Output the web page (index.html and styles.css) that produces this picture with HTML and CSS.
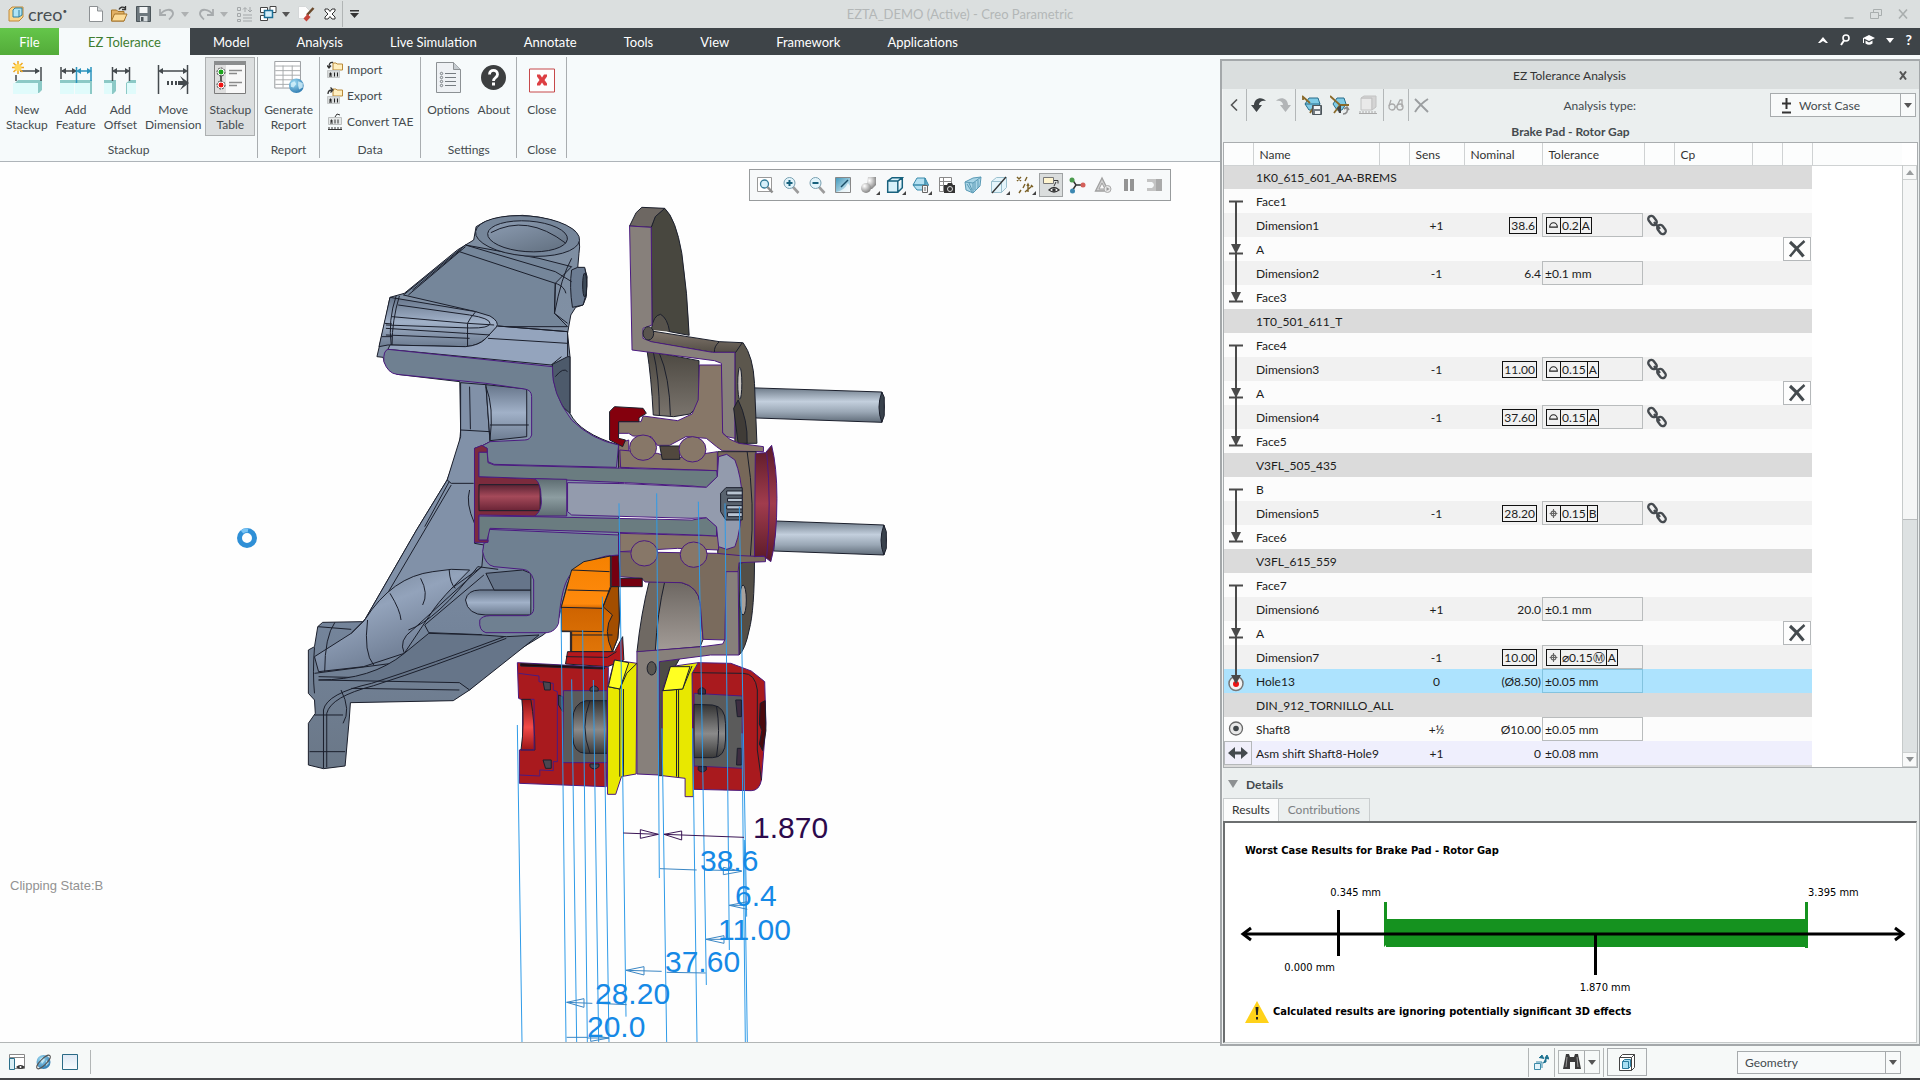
FILE: index.html
```html
<!DOCTYPE html>
<html lang="en">
<head>
<meta charset="utf-8">
<meta name="viewport" content="width=device-width, initial-scale=1">
<title>EZTA_DEMO (Active) - Creo Parametric</title>
<link rel="stylesheet" href="styles.css">
</head>
<body>
<svg class="defs" aria-hidden="true">
  <defs>
    <linearGradient id="gGlass" x1="0" y1="0" x2="1" y2="1"><stop offset="0" stop-color="#3f97bb"/><stop offset="1" stop-color="#e6f5fa"/></linearGradient>
    <linearGradient id="gPale" x1="0" y1="0" x2="0" y2="1"><stop offset="0" stop-color="#dfe9f5"/><stop offset="1" stop-color="#f8fbfe"/></linearGradient>
    <radialGradient id="gGlobe" cx=".35" cy=".3" r=".8"><stop offset="0" stop-color="#9edcf4"/><stop offset="1" stop-color="#2674ac"/></radialGradient>
    <radialGradient id="gBall" cx=".35" cy=".3" r=".8"><stop offset="0" stop-color="#fff"/><stop offset="1" stop-color="#777"/></radialGradient>
    <linearGradient id="gPin" x1="0" y1="0" x2="0" y2="1"><stop offset="0" stop-color="#6d7a88"/><stop offset=".4" stop-color="#c3cfdd"/><stop offset=".7" stop-color="#9aa7b5"/><stop offset="1" stop-color="#5f6b78"/></linearGradient>
    <linearGradient id="gRod" x1="0" y1="0" x2="0" y2="1"><stop offset="0" stop-color="#5a2233"/><stop offset=".45" stop-color="#a54a5a"/><stop offset="1" stop-color="#6a2436"/></linearGradient>
    <linearGradient id="gPlug" x1="0" y1="0" x2="0" y2="1"><stop offset="0" stop-color="#5d6c71"/><stop offset=".5" stop-color="#8d9da1"/><stop offset="1" stop-color="#5d6c71"/></linearGradient>
    <linearGradient id="gCap" x1="0" y1="0" x2="0" y2="1"><stop offset="0" stop-color="#5a1a28"/><stop offset=".5" stop-color="#a13c4d"/><stop offset="1" stop-color="#5a1a28"/></linearGradient>
    <linearGradient id="gBody" x1="0" y1="0" x2="0" y2="1"><stop offset="0" stop-color="#7d8da0"/><stop offset=".45" stop-color="#8493a9"/><stop offset=".75" stop-color="#74849a"/><stop offset="1" stop-color="#6a7787"/></linearGradient>
    <linearGradient id="gBore" x1="0" y1="0" x2="1" y2="1"><stop offset="0" stop-color="#8f9fb5"/><stop offset="1" stop-color="#5f6d7d"/></linearGradient>
    <linearGradient id="gArm" x1="0" y1="0" x2=".6" y2="1"><stop offset="0" stop-color="#6b7a8d"/><stop offset=".45" stop-color="#93a3bb"/><stop offset="1" stop-color="#66748a"/></linearGradient>
    <linearGradient id="gLip" x1="0" y1="0" x2="0" y2="1"><stop offset="0" stop-color="#66758a"/><stop offset=".5" stop-color="#a1b1c8"/><stop offset="1" stop-color="#6c7b90"/></linearGradient>
    <linearGradient id="gDiscLo" x1="0" y1="0" x2="0" y2="1"><stop offset="0" stop-color="#6d6762"/><stop offset="1" stop-color="#a39c97"/></linearGradient>
    <linearGradient id="gHat" x1="0" y1="0" x2="0" y2="1"><stop offset="0" stop-color="#84796f"/><stop offset="1" stop-color="#544e46"/></linearGradient>
    <linearGradient id="gInner" x1="0" y1="0" x2="0" y2="1"><stop offset="0" stop-color="#4c4841"/><stop offset="1" stop-color="#7a746d"/></linearGradient>
    <linearGradient id="gOrange" x1="0" y1="0" x2="0" y2="1"><stop offset="0" stop-color="#f58100"/><stop offset=".5" stop-color="#ff8a0d"/><stop offset=".55" stop-color="#cf6400"/><stop offset="1" stop-color="#e07508"/></linearGradient>
    <linearGradient id="gCav" x1="0" y1="0" x2="0" y2="1"><stop offset="0" stop-color="#333"/><stop offset=".55" stop-color="#8a8a8a"/><stop offset="1" stop-color="#3a3a3a"/></linearGradient>
    <linearGradient id="gRedIn" x1="0" y1="0" x2="0" y2="1"><stop offset="0" stop-color="#8f1213"/><stop offset=".55" stop-color="#f34a48"/><stop offset="1" stop-color="#9c1516"/></linearGradient>
    <symbol id="i-link" viewBox="0 0 20 22"><g fill="none" stroke="#464b50" stroke-width="2.4"><rect x="2.500" y="1.500" width="6" height="10" rx="3" transform="rotate(-38 5.500 6.500)"/><rect x="11.500" y="10.500" width="6" height="10" rx="3" transform="rotate(-38 14.500 15.500)"/><path d="M7 8l6 7"/></g></symbol>
    <symbol id="i-x" viewBox="0 0 18 18"><path d="M2 2Q9 8 15.500 16.500" fill="none" stroke="#444a4e" stroke-width="3.200"/><path d="M16.500 1Q8 8 2 16.500" fill="none" stroke="#444a4e" stroke-width="2.600"/></symbol>
    <symbol id="i-start" viewBox="0 0 24 24"><path d="M5 12.500h14M12 12v12" fill="none" stroke="#4a4a4a" stroke-width="2"/></symbol>
    <symbol id="i-run" viewBox="0 0 24 24"><path d="M12 0v24" stroke="#4a4a4a" stroke-width="2"/></symbol>
    <symbol id="i-node" viewBox="0 0 24 24"><path d="M12 0v24M5 16.500h14" stroke="#4a4a4a" stroke-width="2" fill="none"/><path d="M7 7h10l-5 10z" fill="#4a4a4a"/></symbol>
    <symbol id="i-end" viewBox="0 0 24 24"><path d="M12 0v16M5 16.500h14" stroke="#4a4a4a" stroke-width="2" fill="none"/><path d="M7 7h10l-5 10z" fill="#4a4a4a"/></symbol>
    <symbol id="i-profile" viewBox="0 0 10 10"><path d="M1.500 6.500a3.500 4 0 0 1 7 0z" fill="none" stroke="#222"/></symbol>
    <symbol id="i-position" viewBox="0 0 10 10"><circle cx="5" cy="5" r="2.200" fill="none" stroke="#666"/><path d="M5 1v8M1.500 5h7" stroke="#666"/></symbol>
    <symbol id="i-cube" viewBox="0 0 16 16"><path d="M1.500 4.500h9v10h-9zM1.500 4.500l4-3h9l-4 3M14.500 1.500v9l-4 4" fill="#d8f1fa" stroke="#17617d" stroke-width="1.300"/></symbol>
    <symbol id="i-dataio" viewBox="0 0 16 17"><path d="M6 2h3l1 1h5.500v6H6z" fill="#ffefc0" stroke="#b98a3a"/><path d="M.5 9.500h12v7H.5z" fill="#d7dada" stroke="#c4c7c7"/><path d="M2 13h3M3.500 11.500v3M2 15h3M7.500 11.500v4M10.500 11.500v4" stroke="#222"/></symbol>
  </defs>
</svg>

<div class="app">
  <header class="titlebar">
    <div class="qat">
      <svg class="logo" width="16" height="16" viewBox="0 0 16 16"><path d="M1 4l3-3h11v10l-4 4H1z" fill="#f8d58c" stroke="#c08a3b"/><path d="M5 4l2-2h7v7l-3 2H5z" fill="#aee4f5" stroke="#2c7fa0"/><path d="M11 4v7" stroke="#2c7fa0"/></svg>
      <span class="brand">creo<sup>•</sup></span>
      <button class="ic q1" aria-label="New"><svg width="14" height="16" viewBox="0 0 14 16"><path d="M.5.5h8l5 4.500v10.500H.5z" fill="#fff" stroke="#8c9093"/><path d="M8.500.5V5h5" fill="#d5dadc" stroke="#8c9093"/></svg></button>
      <button class="ic q2" aria-label="Open"><svg width="17" height="16" viewBox="0 0 17 16"><path d="M.5 4h5l1.500 1.500h6V15H.5z" fill="#e2b165" stroke="#a5752a"/><path d="M3.500 8H16l-3 7H.5z" fill="#fcdc98" stroke="#a5752a"/><path d="M8 3.500c1-2.500 4-3 6-1.500M14.500 0v3.500H11" fill="none" stroke="#333" stroke-width="1.300"/></svg></button>
      <button class="ic q3" aria-label="Save"><svg width="15" height="16" viewBox="0 0 15 16"><path d="M.5.5h14v15H.5z" fill="#6e787e" stroke="#4c555a"/><path d="M3.500 1h8v6h-8z" fill="#f4f6f7"/><path d="M4 10h7.500v5.500H4z" fill="#d7dcdf"/><path d="M5 11h2.500v4H5z" fill="#4c555a"/></svg></button>
      <button class="ic q4" aria-label="Undo"><svg width="16" height="14" viewBox="0 0 16 14"><path d="M1 2v6h6M1.500 7.500C5 2 13 1 14 6c.5 3-2 4.500-4 6.500" fill="none" stroke="#a7abad" stroke-width="1.800"/></svg></button>
      <span class="tri pale q5"></span>
      <button class="ic q6" aria-label="Redo"><svg width="16" height="14" viewBox="0 0 16 14"><path d="M15 2v6H9M14.500 7.500C11 2 3 1 2 6c-.5 3 2 4.500 4 6.500" fill="none" stroke="#a7abad" stroke-width="1.800"/></svg></button>
      <span class="tri pale q7"></span>
      <button class="ic q8" aria-label="Regenerate"><svg width="16" height="16" viewBox="0 0 16 16" fill="none" stroke="#a3a7a9"><path d="M.5 1.500h3v3h-3zM.5 7.500h3v3h-3zM.5 13.500h3v2h-3zM6 9h9M6 12h9M6 15h9M8 6V2M6 3.500l2-2 2 2M13 1v4M11 4l2 2 2-2"/></svg></button>
      <button class="ic q9" aria-label="Windows"><svg width="17" height="16" viewBox="0 0 17 16"><path d="M.5 1.500h7v5h-7zM.5 9.500h7v5h-7zM10 .5h6v6h-6z" fill="#fff" stroke="#444"/><path d="M4.500 4.500h8v7h-8z" fill="#d5effa" stroke="#1d6f96" stroke-width="1.500"/></svg></button>
      <span class="tri q10"></span>
      <button class="ic q11" aria-label="Erase"><svg width="17" height="16" viewBox="0 0 17 16"><path d="M.5.5h7l5 5v7h-12z" fill="#fdfdfd" stroke="#d5d8d9"/><path d="M15.500 2L9 9" stroke="#6b4a2c" stroke-width="2.500"/><path d="M9.500 8l3 3-4 4.500-3-3z" fill="#c7453a"/></svg></button>
      <button class="ic q12" aria-label="Close window"><svg width="12" height="12" viewBox="0 0 12 12"><path d="M1 1h3l2 2.500L8 1h3v2L8 6l3 3v2H8L6 8.500 4 11H1V9l3-3-3-3z" fill="#fff" stroke="#333"/></svg></button>
      <span class="qsep"></span>
      <svg class="q13" width="9" height="8" viewBox="0 0 9 8"><path d="M0 0h9v1.500H0zM0 3h9L4.500 8z" fill="#333"/></svg>
    </div>
    <h1 class="apptitle">EZTA_DEMO (Active) - Creo Parametric</h1>
    <div class="winbtns">
      <button class="ic" aria-label="Minimize"><svg width="12" height="12" viewBox="0 0 12 12"><path d="M1.500 10h9" stroke="#a9aeae" stroke-width="1.500"/></svg></button>
      <button class="ic" aria-label="Restore"><svg width="12" height="12" viewBox="0 0 12 12" fill="none" stroke="#a9aeae"><path d="M3.500 4V1.500h8v6H9M.5 4.500h8v6h-8z"/></svg></button>
      <button class="ic" aria-label="Close"><svg width="12" height="12" viewBox="0 0 12 12"><path d="M2 1.500l8 9M10 1.500l-8 9" stroke="#a9aeae" stroke-width="1.600"/></svg></button>
    </div>
  </header>

  <nav class="tabs">
    <a class="file" href="#">File</a><a class="on" href="#">EZ Tolerance</a><a href="#">Model</a><a href="#">Analysis</a><a href="#">Live Simulation</a><a href="#">Annotate</a><a href="#">Tools</a><a href="#">View</a><a href="#">Framework</a><a href="#">Applications</a>
    <div class="tabtools">
      <svg width="10" height="8" viewBox="0 0 10 8"><path d="M0 7l5-6 5 6-2 0-3-2-3 2z" fill="#fff"/></svg>
      <svg width="10" height="12" viewBox="0 0 10 12"><circle cx="6" cy="4" r="3" fill="none" stroke="#fff" stroke-width="1.600"/><path d="M4 6.500L1 11" stroke="#fff" stroke-width="2"/></svg>
      <svg width="14" height="12" viewBox="0 0 14 12"><path d="M1 4l6-3 6 3-6 3zM3.500 6.500v3Q7 12 10.500 9.500v-3L7 8.500zM1 4h1v5H1z" fill="#fff"/></svg>
      <span class="tri white"></span>
      <b>?</b>
    </div>
  </nav>

  <section class="ribbon">
    <div class="group">
      <div class="tools">
        <button class="big"><svg width="32" height="33" viewBox="0 0 32 33"><path d="M4 22l3-3h24v10l-3 3H2z" fill="#8cc9c6"/><path d="M2 22h25v11H2z" fill="#e0fbfb"/><path d="M5 14v6M30 6v14M9 10h19" stroke="#444a4e" stroke-width="1.500"/><path d="M24 7l5 3-5 3z" fill="#444a4e"/><path d="M7 0v13M1 6.500h12M2.500 2l9 9M11.500 2l-9 9" stroke="#f0a71e" stroke-width="1.500"/><circle cx="7" cy="6.500" r="3.500" fill="#ffd75a"/></svg><span>New<br>Stackup</span></button>
        <button class="big"><svg width="32" height="33" viewBox="0 0 32 33"><path d="M0 19h32v14h-2V22H0z" fill="#8cc9c6"/><path d="M0 22h14v11H0zM15 22h15v11H15z" fill="#e0fbfb"/><path d="M1 6v12M2 10h14" stroke="#444a4e" stroke-width="1.500"/><path d="M6 7l-5 3 5 3zM12 7l5 3-5 3z" fill="#444a4e"/><path d="M16.500 6v16M31 6v14M18 10h12" stroke="#2a93bd" stroke-width="1.500"/><path d="M21 7l-5 3 5 3zM27 7l5 3-5 3z" fill="#2a93bd"/></svg><span>Add<br>Feature</span></button>
        <button class="big"><svg width="32" height="33" viewBox="0 0 32 33"><path d="M0 19h12v11l-3 3H0zM22 22l4-3h6v14H22z" fill="#8cc9c6"/><path d="M0 22h8v11H0zM23 22h9v11h-9z" fill="#e0fbfb"/><path d="M8.500 6v14M25.500 6v14M9 10h16" stroke="#444a4e" stroke-width="1.500"/><path d="M13 7l-5 3 5 3zM21 7l5 3-5 3z" fill="#444a4e"/></svg><span>Add<br>Offset</span></button>
        <button class="big"><svg width="32" height="33" viewBox="0 0 32 33"><path d="M1.500 4v29M30.500 4v29M3 10h26" stroke="#444a4e" stroke-width="1.500"/><path d="M6 7l-5 3 5 3zM26 7l5 3-5 3z" fill="#444a4e"/><path d="M10 20v4h2v-4zM14 20v4h2v-4zM18 20v4h2v-4zM21 20h5l-3-5 9 7-9 7 3-5h-5z" fill="#444a4e"/></svg><span>Move<br>Dimension</span></button>
        <button class="big pressed"><svg width="32" height="33" viewBox="0 0 32 33"><path d="M.5.500h31v32H.5z" fill="#f8f8f8" stroke="#7b7b7b"/><path d="M0 0h32v4H0z" fill="#8b8d8e"/><path d="M1 4h11v28H1z" fill="#dedede"/><path d="M7 11v13" stroke="#333" stroke-width="1.500"/><circle cx="7" cy="11" r="3" fill="#1ea51e" stroke="#fff"/><circle cx="7" cy="11" r="4" fill="none" stroke="#444" stroke-dasharray="2 1"/><circle cx="7" cy="24" r="3" fill="#f01313" stroke="#fff"/><circle cx="7" cy="24" r="4" fill="none" stroke="#444" stroke-dasharray="2 1"/><path d="M15 9.500h13M15 12.500h8M15 21.500h13M15 24.500h8" stroke="#8a8a8a" stroke-width="1.500"/></svg><span>Stackup<br>Table</span></button>
      </div>
      <h2>Stackup</h2>
    </div>
    <div class="group">
      <div class="tools">
        <button class="big"><svg width="34" height="36" viewBox="0 0 34 36"><path d="M1.500.5h28v29h-28z" fill="#fff" stroke="#929598"/><path d="M2 5.500h27M2 10.500h27M2 15.500h27M2 20.500h27M2 25.500h27M10.500 5v24M20.500 5v24" stroke="#a3a6a9" fill="none"/><circle cx="25" cy="27" r="8" fill="url(#gGlobe)"/><path d="M19 24l4-2 2 3-3 4-3-1zM27 22l5 2v5l-4 2-1-4z" fill="#d8f2fb" opacity=".8"/></svg><span>Generate<br>Report</span></button>
      </div>
      <h2>Report</h2>
    </div>
    <div class="group data">
      <div class="tools rows">
        <button class="small"><svg width="16" height="17" viewBox="0 0 16 17"><use href="#i-dataio"/><path d="M6 1.500C3 1 2 3 2 6M0 4.500L2 7l2-2.500" fill="none" stroke="#333" stroke-width="1.300"/></svg>Import</button>
        <button class="small"><svg width="16" height="17" viewBox="0 0 16 17"><use href="#i-dataio"/><path d="M1 7c0-3 1-4 4-4M3.500.500L6 3 3.500 5.500" fill="none" stroke="#333" stroke-width="1.300"/></svg>Export</button>
        <button class="small"><svg width="16" height="17" viewBox="0 0 16 17"><path d="M1.500 4.500h13v7h-13z" fill="#e5e8e8" stroke="#bcbfbf"/><path d="M3 8h3M4.500 6.500v3M3 10h3M8 6.500v4M11 6.500v4M8 4l2-3 3 1M1 16.500h14M2 14v2M5 14v2M8 14v2M11 14v2M14 14v2" stroke="#333" fill="none"/></svg>Convert TAE</button>
      </div>
      <h2>Data</h2>
    </div>
    <div class="group">
      <div class="tools">
        <button class="big"><svg width="25" height="31" viewBox="0 0 25 31"><path d="M.5.500h17l7 7v23H.5z" fill="#eef1f4" stroke="#8c9194"/><path d="M17.500.500v7h7" fill="#c5cbd0" stroke="#8c9194"/><path d="M9 11.500h11M9 15.500h11M9 19.500h11M9 23.500h11" stroke="#757b80"/><g fill="none" stroke="#757b80"><circle cx="5.500" cy="11.500" r="1.200"/><circle cx="5.500" cy="15.500" r="1.200"/><circle cx="5.500" cy="19.500" r="1.200"/><circle cx="5.500" cy="23.500" r="1.200"/></g></svg><span>Options</span></button>
        <button class="big"><svg width="25" height="25" viewBox="0 0 25 25"><circle cx="12.500" cy="12.500" r="12.500" fill="#3d3f40"/><path d="M8.500 9.500c0-5.500 8-5.500 8 0 0 3-4 3-4 6.500" fill="none" stroke="#fff" stroke-width="2.800"/><path d="M11 17.500h3v3h-3z" fill="#fff"/></svg><span>About</span></button>
      </div>
      <h2>Settings</h2>
    </div>
    <div class="group closegrp">
      <div class="tools">
        <button class="big"><svg width="26" height="24" viewBox="0 0 26 24"><path d="M.5.500h25v23H.5z" fill="#fdfefe" stroke="#c6494b"/><path d="M8 6h3l2 3 2-3h3v2l-2.500 3.500L18 15v2h-3l-2-3-2 3H8v-2l2.500-3.500L8 8z" fill="#dc3f43"/></svg><span>Close</span></button>
      </div>
      <h2>Close</h2>
    </div>
  </section>

  <main class="view">
    <svg class="scene" viewBox="0 162 1220 880" preserveAspectRatio="xMinYMin slice" role="img" aria-label="Section view of wheel hub and brake assembly">
      <g class="model" transform="translate(290 190) scale(.40816 .33333)">
        <!-- pins -->
        <path d="M1120 593L1450 606L1456 650L1450 697L1120 683z" fill="url(#gPin)"/><path d="M1450 606q-14 46 0 91l6-20v-55z" fill="#39424c"/>
        <path d="M1190 993L1455 1005L1461 1050L1455 1095L1185 1083z" fill="url(#gPin)"/><path d="M1455 1005q-14 46 0 90l6-20v-50z" fill="#39424c"/>
        <!-- brake disc, upper -->
        <path d="M885 112L895 78L918 55Q945 85 960 190Q974 310 978 436L930 425L887 405z" fill="#48473f"/>
        <path d="M875 483L1002 512V645L980 672L940 680L890 675Q885 560 875 483z" fill="url(#gInner)"/><path d="M905 490Q930 560 932 677M890 486Q905 560 905 675" fill="none"/>
        <path d="M832 108L848 68L862 52L918 55L895 80L885 112z" fill="#6d6762"/>
        <path d="M1090 470L1110 458Q1135 500 1138 580L1144 760H1090z" fill="#5c574d"/>
        <path d="M870 420L1052 455L1108 458L1092 487L1035 487L880 455z" fill="url(#gHat)"/><path d="M1052 455Q1038 470 1040 487" fill="none"/><path d="M885 420Q890 375 908 373Q925 385 930 425" fill="#57534c"/>
        <path class="cut" d="M832 108L885 112L887 405L865 415V445L885 455L1035 487L1090 487V745L1070 740L1058 725L1057 520L1040 512L838 480z" fill="#87807b"/>
        <ellipse cx="878" cy="430" rx="13" ry="20" fill="#5a554f"/><ellipse cx="1102" cy="580" rx="5" ry="48" fill="#c9c5c0"/>
        <path d="M1087 655L1098 630Q1122 690 1120 760H1098z" fill="#403c37"/>
        <!-- brake disc, lower -->
        <path d="M1100 1120L1138 1110Q1138 1260 1125 1320Q1115 1380 1100 1395z" fill="#544f47"/>
        <path d="M880 1175H920Q905 1280 897 1382L850 1386Q860 1270 880 1175z" fill="#6f6963"/>
        <path d="M918 1175L960 1178Q1000 1190 1005 1240L1012 1348L1005 1370L895 1382Q900 1270 918 1175z" fill="url(#gDiscLo)"/>
        <path d="M903 1412L955 1405L915 1490V1757H903z" fill="#4d4c47"/>
        <ellipse cx="1110" cy="1230" rx="8" ry="45" fill="#a8a29c"/>
        <!-- hub -->
        <path class="cut" d="M1003 525L1057 525L1060 730L1078 748L1100 760L1160 770V785L1060 783L1045 770L1020 745L970 740L930 766H900L885 740L840 738L830 730L805 730V695H860L865 678L950 692L985 672L1000 630z" fill="#877768"/>
        <path class="cut" d="M805 760L830 750V840H820L805 830z" fill="#877768"/>
        <path d="M1048 785H1142V1100H1048z" fill="#776859"/><path d="M1120 785Q1140 940 1128 1100" fill="none"/>
        <path class="cut" d="M808 780L900 790L940 805L1047 785V842L810 832z" fill="#877768"/>
        <path d="M906 768H955V808H912z" fill="#51483e"/>
        <path class="cut" d="M808 1030L1050 1038V1080L950 1075L808 1085z" fill="#877768"/>
        <path class="cut" d="M808 1085L1045 1090L1105 1097L1165 1100V1115L1100 1118L1098 1145L1068 1150L1066 1350L1012 1348L1005 1240Q1000 1190 960 1178L870 1176L862 1165L808 1160z" fill="#7a6b5d"/>
        <g class="cut" fill="#877768"><ellipse cx="865" cy="773" rx="33" ry="38"/><ellipse cx="986" cy="778" rx="33" ry="38"/><ellipse cx="868" cy="1090" rx="33" ry="38"/><ellipse cx="989" cy="1094" rx="33" ry="38"/></g>
        <path class="cut" d="M1068 1145L1098 1145L1100 1395L1030 1395L905 1415L903 1755L850 1752V1385L1010 1370L1060 1362L1066 1348z" fill="#87807b"/>
        <ellipse cx="886" cy="1435" rx="11" ry="20" fill="#5a5651"/>
        <!-- dust cap and seals -->
        <path class="cut" d="M1140 790L1165 788L1180 766Q1193 830 1193 925Q1193 1050 1178 1115L1160 1098L1138 1100z" fill="url(#gCap)"/><path class="cut" d="M1168 788Q1180 940 1168 1100" fill="none"/>
        <path d="M783 665L795 650L865 655L873 670L855 683V695H805V745L822 750L815 770L783 750z" fill="#84000d"/>
        <path d="M787 1095H805L808 1165H863V1190H787z" fill="#750010"/>
        <!-- knuckle -->
        <path d="M450 150L456 110Q490 78 570 76Q650 82 698 122Q714 150 708 190L705 232L722 235L728 260L726 320L718 345L700 352L688 375L680 430L686 500V670Q710 730 805 765V1095Q710 1110 680 1180L655 1300L620 1335L520 1410L440 1500L400 1532L148 1538L145 1590L135 1728L82 1736L45 1725V1600L62 1570L60 1530L45 1510V1380L60 1370L68 1310L80 1297L178 1295L183 1290L310 1020L385 870L415 770L418 720L416 575L262 553L232 520L228 502L213 500L232 400L245 322L280 310L410 180z" fill="url(#gBody)"/>
        <path d="M643 560V500H686V670Q650 640 643 560z" fill="#4d5a6b"/>
        <path d="M418 578L480 584L490 755L470 768L452 775V1060L475 1065L470 1130L390 1200L183 1290L310 1020L385 870L418 740z" fill="#8191a8"/>
        <path d="M480 584L580 597V740L490 752z" fill="url(#gLip)"/>
        <path d="M278 315L430 165L610 205L690 230L650 280L648 370L680 410H508L455 365z" fill="#75869a"/>
        <path d="M245 322L455 365L490 378Q514 395 506 412L480 445Q460 468 430 470L240 465L218 470z" fill="url(#gLip)"/>
        <path d="M508 408L680 425V500L640 525L240 478L245 465L430 470Q465 466 480 445z" fill="#94a4bd"/>
        <ellipse cx="582" cy="138" rx="128" ry="60" fill="#76869a" transform="rotate(6 582 138)"/>
        <ellipse cx="582" cy="139" rx="98" ry="46" fill="url(#gBore)" transform="rotate(5 582 139)"/><path d="M492 128Q580 70 676 160" fill="none"/>
        <path d="M705 232H722Q734 290 718 345L692 352Q684 290 690 240z" fill="#6c7c92"/><ellipse cx="722" cy="285" rx="5" ry="36" fill="#3d4957"/>
        <path d="M430 165L650 245L690 275M415 185L655 282Q672 290 676 310M650 280L648 370L680 400M690 205Q665 260 648 370M265 345L440 375Q490 385 490 400T440 414L235 405M250 380L435 400L500 405M235 415L430 430L490 435M235 435L440 445M260 318Q240 390 248 465M268 318Q250 390 250 465M510 408L680 425M485 445L680 460M300 300L420 178M290 315L430 170M640 525L665 500M650 560Q670 530 680 545M232 400L250 402M225 440H250M435 400V468M455 365Q440 385 435 400" fill="none"/>
        <path d="M418 720L490 725M440 590L442 718M480 590Q500 650 490 750M490 705H585M385 870L395 880H450M440 900Q430 940 452 1000M390 875L330 1010M395 885L215 1260" fill="none"/>
        <path d="M183 1290Q250 1160 350 1145L395 1138L440 1140L400 1190Q360 1240 340 1280L280 1390L180 1430L70 1445L60 1400L150 1330z" fill="url(#gArm)"/>
        <path d="M245 1210Q270 1260 272 1290M320 1165Q340 1210 325 1245M390 1140Q392 1180 405 1195M190 1290Q180 1390 205 1425M470 1130L300 1320Q265 1350 280 1390M475 1155L330 1305L340 1328L470 1334M520 1340Q460 1370 280 1390M60 1372Q55 1450 60 1510M110 1297Q85 1340 85 1445M60 1450L250 1420L525 1340M70 1460L430 1470M150 1495L415 1500M290 1320Q360 1290 460 1130M150 1330L183 1290M68 1310L150 1318" fill="none"/>
        <path d="M430 1230Q435 1200 465 1200H590V1275H480Q435 1275 430 1230z" fill="url(#gLip)"/>
        <path d="M340 1330L470 1335L530 1340L610 1335L440 1500L415 1478L70 1470Q200 1470 280 1390z" fill="#667589"/>
        <path d="M525 1340Q350 1420 200 1480Q90 1510 82 1560V1735M530 1345Q350 1430 205 1487Q100 1520 90 1570V1732M60 1575H130M48 1685H135M125 1500Q150 1560 130 1600" fill="none"/>
        <path d="M570 1140L590 1150V1200H500L480 1150z" fill="#66758a"/><path d="M460 1130L510 1138" fill="none"/>
        <path class="cut" d="M240 478Q228 482 230 515Q240 550 262 553L480 580L575 597Q592 600 592 620V735Q588 750 575 750L490 755L470 768L483 775L485 815L500 823L800 832L805 765Q740 750 690 690Q640 610 643 530z" fill="#6f8091"/>
        <path class="cut" d="M485 1018L805 1035V1095Q740 1095 690 1150Q665 1180 658 1300Q650 1325 630 1328H480Q462 1322 465 1290Q470 1278 490 1277H580Q597 1275 597 1255V1170Q590 1140 570 1138L500 1130Q478 1125 472 1085L475 1060L485 1055z" fill="#6f8091"/>
        <!-- spindle, bolt and plug -->
        <path class="cut" d="M452 775L470 766L483 775V787H463V860L600 866L615 880V965L600 978L463 975V1050H485V1057H452z" fill="#7c2b3d"/>
        <path d="M463 884H613V962H463z" fill="url(#gRod)"/>
        <path class="cut" d="M463 787H483L485 818L500 825L1045 842L1047 860L1020 892L985 888L820 878L600 866L463 860z" fill="#6a7c80"/>
        <path class="cut" d="M463 978L600 980L985 990L1020 983L1045 1010V1038L1000 1035L490 1015L483 1050H463z" fill="#6a7c80"/>
        <path class="cut" d="M600 866L678 868V978L600 978Q620 960 615 920Q615 880 600 866z" fill="url(#gPlug)"/>
        <path class="cut" d="M680 878L820 881L1020 892L1047 860L1050 800L1070 793L1090 810Q1106 860 1108 925Q1106 1020 1090 1070L1070 1078L1050 1070L1045 1010L1020 983L985 985L690 975L680 965z" fill="#939bad"/>
        <path d="M1055 910L1068 893H1108V990H1068L1055 965z" fill="#59636f"/><path d="M1070 903h38v12h-38zM1072 925h36v10h-36zM1070 947h38v10h-38zM1072 968h36v12h-36z" fill="#b8c4d2"/>
        <!-- caliper bracket -->
        <path d="M665 1250L690 1140L720 1115L785 1098V1190H805L807 1290L803 1345L790 1385H687V1325H665z" fill="url(#gOrange)"/>
        <path d="M767 1250L787 1190H805L807 1290L803 1345L790 1385Q765 1320 790 1275z" fill="#a34e00"/>
        <path d="M690 1140L783 1145M680 1200L783 1203M665 1252L767 1255V1325L665 1323M690 1325V1385M690 1335H790M767 1250L785 1190" fill="none"/>
        <path d="M680 1385H795L815 1340L818 1410L778 1430L675 1422z" fill="#b4181c"/><path d="M676 1400L778 1402L800 1385" fill="none"/>
        <!-- caliper, inboard half -->
        <path class="cut" d="M557 1418L780 1432L775 1790L562 1780V1680L570 1678V1530L560 1525z" fill="#a91a1e"/>
        <path d="M565 1421L770 1433V1437L565 1428z" fill="#260508"/>
        <path d="M568 1528H590Q600 1600 600 1680H566Q575 1600 568 1528z" fill="url(#gRedIn)"/>
        <path class="cut" d="M560 1450L610 1458V1475L645 1480V1500L655 1505V1715H645V1742L612 1740V1758L562 1755M590 1528H598V1680H565" fill="none"/>
        <path class="cut" d="M670 1502H777V1718H668z" fill="#5b5b5b"/><path d="M620 1475l18 3v22h-14zM658 1515l10 5v45l-10-20zM735 1495q12-14 20 0v8h-20zM735 1722h22v8q-12 14-22 0zM620 1710h20v25h-14z" fill="#4a4650"/>
        <path d="M777 1532H725Q693 1540 693 1590V1640Q693 1690 725 1690H777z" fill="url(#gCav)"/><path d="M735 1532Q710 1610 735 1690" fill="none"/>
        <!-- caliper, outboard half -->
        <path class="cut" d="M985 1450L1000 1418L1080 1420L1130 1443L1163 1475L1166 1600L1155 1770Q1150 1802 1130 1802L988 1798z" fill="#a91a1e"/>
        <path d="M988 1448L1110 1450Q1140 1450 1145 1500V1680L1155 1770" fill="none"/><path d="M1152 1540l12-8 2 90-8 60-8-20 6-40-6-20z" fill="#4b0a0e"/>
        <path class="cut" d="M990 1510L1108 1518V1735L990 1728z" fill="#5b5b5b"/><path d="M1092 1530h14v50h-10zM1096 1675h10v50h-12zM1000 1500q10-14 18 0v12h-18zM1000 1730h20v10q-10 12-20 0z" fill="#3d2d40"/>
        <path d="M990 1543L1035 1545Q1067 1550 1067 1600V1650Q1067 1703 1035 1703H990z" fill="url(#gCav)"/><path d="M1045 1548Q1055 1620 1045 1700" fill="none"/>
        <!-- pads -->
        <path class="cut" d="M778 1490L795 1410L850 1420L848 1752L820 1758L812 1760L798 1813H778z" fill="#e8e800"/><path d="M778 1490L808 1497L825 1450L850 1420M808 1497V1760M817 1497V1758" fill="none"/><path d="M795 1410L830 1418L808 1497L780 1490z" fill="#ffff22"/>
        <path class="cut" d="M912 1502L932 1430L1000 1418L985 1450L988 1820H968V1765L912 1757z" fill="#e8e800"/><path d="M912 1502L962 1497L985 1428M947 1500V1760M952 1500V1762" fill="none"/><path d="M932 1430L980 1430L962 1497L914 1502z" fill="#ffff22"/>
      </g>
      <g class="witness" transform="translate(500 640) scale(.33333)">
        <path d="M52 255L66 1206M183 -95L198 1206M215 118L230 1206M248 -30L262 1206M280 120L296 1206M307 -130L327 1206M357 -410L378 1130M470 -440L478 714M486 265L500 1206M578 265L591 1206M595 -415L619 1035M675 -410L688 930M718 -400L740 830M726 280L736 1206"/>
        <path d="M733 600L742 1206"/>
      </g>
      <g class="dims" transform="translate(500 640) scale(.33333)">
        <path class="gap" d="M370 579L475 583M421 569V595L475 583zM492 583L732 592M545 573V600L492 583z"/>
        <path d="M480 686L590 690M613 690L725 692M670 682V704L725 694zM742 785L688 796L742 808M688 796H732M688 898H618L672 887V910L618 898M485 994L378 991L432 980V1005L378 991M500 997L617 999M277 1090L200 1087L252 1076V1102L200 1087M290 1090L380 1094M200 1192H262M262 1194L327 1194L272 1186V1204L327 1194"/>
      </g>
      <g class="dimtext">
        <text x="753" y="838" class="gaptext">1.870</text><text x="700" y="871">38.6</text><text x="735" y="906">6.4</text><text x="718" y="940">11.00</text><text x="665" y="972">37.60</text><text x="595" y="1004">28.20</text><text x="587" y="1037">20.0</text>
      </g>
      <circle cx="247" cy="538" r="7.500" fill="none" stroke="#2f8fd6" stroke-width="5"/><path d="M242 532a7.500 7.500 0 0 1 6-1.500" fill="none" stroke="#79c4f5" stroke-width="4"/>
    </svg>
    <div class="viewbar">
      <button class="ic" aria-label="Refit"><svg width="18" height="18" viewBox="0 0 18 18"><path d="M1.500 1.500h14v14h-14z" fill="#fff" stroke="#999"/><circle cx="8.500" cy="8" r="4" fill="#d6f0fa" stroke="#347c98" stroke-width="1.300"/><path d="M11.500 11l5 5.500" stroke="#8d8d8d" stroke-width="2.500"/></svg></button>
      <button class="ic" aria-label="Zoom in"><svg width="18" height="18" viewBox="0 0 18 18"><path d="M11 11l5.500 6" stroke="#9b9b9b" stroke-width="2.600"/><circle cx="7.500" cy="7" r="5.500" fill="#e2f4fb" stroke="#789fb0"/><path d="M7.500 4v6M4.500 7h6" stroke="#17617d" stroke-width="2"/></svg></button>
      <button class="ic" aria-label="Zoom out"><svg width="18" height="18" viewBox="0 0 18 18"><path d="M11 11l5.500 6" stroke="#9b9b9b" stroke-width="2.600"/><circle cx="7.500" cy="7" r="5.500" fill="#e2f4fb" stroke="#789fb0"/><path d="M4.500 7h6" stroke="#17617d" stroke-width="2"/></svg></button>
      <button class="ic" aria-label="Repaint"><svg width="18" height="18" viewBox="0 0 18 18"><path d="M1.500 1.500h15v15h-15z" fill="url(#gGlass)" stroke="#888"/><path d="M2 16q8-1 12-9l2 3v6z" fill="#fff" opacity=".7"/><path d="M7 11l7-7" stroke="#174d66" stroke-width="1.500"/></svg></button>
      <button class="ic more" aria-label="Shading"><svg width="18" height="18" viewBox="0 0 18 18"><path d="M8 1h8v8l-4 4H6z" fill="url(#gBall)"/><circle cx="6" cy="12" r="5" fill="url(#gBall)"/></svg></button>
      <button class="ic more" aria-label="Display style"><svg width="18" height="18" viewBox="0 0 18 18"><use href="#i-cube"/></svg></button>
      <button class="ic more" aria-label="Saved orientations"><svg width="18" height="18" viewBox="0 0 18 18"><path d="M1 9l4-7h8v7zM1 9l4 5h8V9z" fill="#b5e1f2" stroke="#3a8bab"/><path d="M13 2l3.500 7L13 14z" fill="#62aac8" stroke="#3a8bab"/><path d="M10.500 9.500h5v7h-5z" fill="#f5f5f5" stroke="#666"/><path d="M12 12h2M12 14h2" stroke="#666"/></svg></button>
      <button class="ic" aria-label="View manager"><svg width="18" height="18" viewBox="0 0 18 18"><path d="M1.500 1.500h12v14h-12zM1.500 5.500h12M1.500 9.500h12M5.500 1.500v14" fill="#fff" stroke="#8a8a8a"/><path d="M6 9h3l1-2h4l1 2h2v8H6z" fill="#333"/><circle cx="12" cy="13" r="2.500" fill="#333" stroke="#ddd"/></svg></button>
      <button class="ic" aria-label="Perspective"><svg width="18" height="18" viewBox="0 0 18 18"><path d="M1 6l8-4 8-1-1 9-7 7-7-3z" fill="#a9d5e6" stroke="#5a9ab5"/><path d="M9 17V7l8-6M1 6l8 1M3 8l5 8M5 7l3 7M11 6v8M14 4v8" stroke="#5a9ab5" fill="none"/></svg></button>
      <button class="ic more" aria-label="Sections"><svg width="18" height="18" viewBox="0 0 18 18"><path d="M1.500 5.500h10v11h-10zM1.500 5.500l5-4h10v10l-5 5" fill="#e4f4fa" stroke="#9bc0ce"/><path d="M2 17L16 1" stroke="#333" stroke-width="1.300"/></svg></button>
      <button class="ic more" aria-label="Datum display"><svg width="18" height="18" viewBox="0 0 18 18" fill="none" stroke="#7a6025" stroke-width="1.400"><path d="M1 1l4 4M5 1L1 5M11 1L9 5M9 8l-2 4M5 14l-2 3M12 8v8M9 16l7-6M15 9l2 2M11 10l1-2 1 2"/></svg></button>
      <button class="ic active" aria-label="Annotation display"><svg width="18" height="18" viewBox="0 0 18 18"><path d="M1.500 1.500h10v6h-10z" fill="#fff5cf" stroke="#777"/><path d="M12 4.500h4v3M14 6l-2 4" stroke="#333" fill="none"/><path d="M7 14q5-5 10 0-5 4-10 0z" fill="#fff" stroke="#333" stroke-width="1.300"/><circle cx="12" cy="14" r="1.800" fill="#333"/></svg></button>
      <button class="ic" aria-label="Spin center"><svg width="18" height="18" viewBox="0 0 18 18"><path d="M4 3l4 6 7 0M8 9l-4 6" fill="none" stroke="#333" stroke-width="1.500"/><circle cx="4" cy="4" r="2.500" fill="#4a9a4c"/><circle cx="15" cy="9" r="2.500" fill="#d4605a"/><circle cx="4.500" cy="15" r="2.500" fill="#3c88b2"/></svg></button>
      <button class="ic" aria-label="Simulate"><svg width="18" height="18" viewBox="0 0 18 18"><path d="M8 2L1.500 15h13z" fill="#d0d0d0" stroke="#a0a0a0" stroke-width="1.300"/><path d="M8 7l-3 6h6z" fill="#fafafa" stroke="#a0a0a0"/><circle cx="13.500" cy="13" r="3.500" fill="#e8e8e8" stroke="#aaa"/><path d="M12.500 11l3 2-3 2z" fill="#999"/></svg></button>
      <button class="ic" aria-label="Pause"><svg width="18" height="18" viewBox="0 0 18 18"><path d="M4 3h4v12H4zM10 3h4v12h-4z" fill="#949494"/></svg></button>
      <button class="ic" aria-label="Results display"><svg width="18" height="18" viewBox="0 0 18 18"><path d="M1 3h15v12H1v-3h5q4-3 0-6H1z" fill="#c4c4c4"/><path d="M10 3h6v12h-6z" fill="#aaa"/></svg></button>
    </div>
    <p class="clipstate">Clipping State:B</p>
  </main>

  <aside class="panel">
    <header class="phead"><h2>EZ Tolerance Analysis</h2><button class="ic" aria-label="Close panel"><svg width="8" height="9" viewBox="0 0 8 9"><path d="M1 .5l6 8M7 .5l-6 8" stroke="#555" stroke-width="2"/></svg></button></header>
    <div class="ptools">
      <div class="pt w1"><button class="ic" aria-label="Back"><svg width="8" height="12" viewBox="0 0 8 12"><path d="M7 .5L1.500 6 7 11.500" fill="none" stroke="#555" stroke-width="1.600"/></svg></button></div>
      <div class="pt w2"><button class="ic" aria-label="Undo"><svg width="16" height="16" viewBox="0 0 16 16"><path d="M0 8h3C3 1 11-1 15 4c-4-1-7 1-7 4h3l-5.500 7z" fill="#3f4447"/></svg></button><button class="ic" aria-label="Redo"><svg width="16" height="16" viewBox="0 0 16 16"><path d="M16 8h-3C13 1 5-1 1 4c4-1 7 1 7 4H5l5.500 7z" fill="#b2b5b7"/></svg></button></div>
      <div class="pt w3">
        <button class="ic" aria-label="Save stackup"><svg width="20" height="20" viewBox="0 0 20 20"><path d="M3 9l4-6h9l2 6-4 6H7z" fill="#7fcbe6" stroke="#286d8a"/><path d="M3 9h15" stroke="#286d8a"/><path d="M0 1l8 7M1 2v3M8 18l3-5" stroke="#8a6a2a" stroke-width="1.800"/><path d="M10.500 10.500h9v9h-9z" fill="#747c82" stroke="#4c555a"/><path d="M12 11h6v3h-6zM13 16h5v3h-5z" fill="#f1f3f4"/></svg></button>
        <button class="ic" aria-label="Update stackup"><svg width="20" height="20" viewBox="0 0 20 20"><path d="M3 9l4-6h7l2 6-4 6H7z" fill="#7fcbe6" stroke="#286d8a"/><path d="M0 1l10 9M10 10h9M10 10l-6 8" stroke="#8a6a2a" stroke-width="1.800"/><path d="M7 13l4-3v8H9z" fill="#444"/><path d="M13 19c4 0 5-3 4-6M14 14l3-2 2 3" fill="none" stroke="#888" stroke-width="1.600"/></svg></button>
        <button class="ic" aria-label="Report"><svg width="20" height="20" viewBox="0 0 20 20"><path d="M3 3h11v12H3z" fill="#e9e9e9" stroke="#c2c2c2"/><path d="M3 3l3-2h12v11l-4 3V3z" fill="#d4d4d4" stroke="#c2c2c2"/><path d="M1 18.500h18M2 16v2M5 16v2M8 16v2M11 16v2M14 16v2M17 16v2" stroke="#aaa"/></svg></button>
      </div>
      <div class="pt w4"><button class="ic" aria-label="Show"><svg width="16" height="12" viewBox="0 0 16 12" fill="none" stroke="#aaa" stroke-width="1.300"><circle cx="4" cy="8" r="3"/><circle cx="12" cy="8" r="3"/><path d="M1 7l2-6M9 7l3-6h2v7M7 8h2"/></svg></button></div>
      <div class="pt w5"><button class="ic" aria-label="Delete"><svg width="15" height="15" viewBox="0 0 15 15"><path d="M1 1l13 13M14 1Q6 6 1 14" stroke="#9b9ea0" stroke-width="1.900" fill="none"/></svg></button></div>
      <label for="atype">Analysis type:</label>
      <div class="combo atype"><svg width="9" height="17" viewBox="0 0 9 17"><path d="M0 6.500h9M4.500 1v11M0 15.500h9" stroke="#333" stroke-width="2"/></svg><select id="atype"><option>Worst Case</option></select><span class="drop"><span class="tri"></span></span></div>
    </div>
    <h3 class="stackname">Brake Pad - Rotor Gap</h3>

    <div class="grid">
      <div class="tablearea">
      <table>
        <colgroup><col class="c1"><col class="c2"><col class="c3"><col class="c4"><col class="c5"><col class="c6"><col class="c7"><col class="c8"><col class="c9"><col class="c10"><col></colgroup>
        <thead><tr><th></th><th>Name</th><th></th><th>Sens</th><th>Nominal</th><th>Tolerance</th><th></th><th>Cp</th><th></th><th></th><th></th></tr></thead>
        <tbody>
          <tr class="part"><td></td><td colspan="9">1K0_615_601_AA-BREMS</td></tr>
          <tr><td><svg><use href="#i-start"/></svg></td><td>Face1</td><td colspan="8"></td></tr>
          <tr class="dim"><td><svg><use href="#i-run"/></svg></td><td>Dimension1</td><td></td><td>+1</td><td><span class="basic">38.6</span></td><td><button class="tol"><span class="fcf"><i><svg><use href="#i-profile"/></svg></i><i>0.2</i><i>A</i></span></button></td><td><svg class="lk"><use href="#i-link"/></svg></td><td colspan="3"></td></tr>
          <tr><td><svg><use href="#i-node"/></svg></td><td>A</td><td colspan="7"></td><td><button class="del" aria-label="Remove"><svg><use href="#i-x"/></svg></button></td></tr>
          <tr class="dim"><td><svg><use href="#i-run"/></svg></td><td>Dimension2</td><td></td><td>-1</td><td>6.4</td><td><input class="tol" aria-label="Dimension2 tolerance" value="±0.1 mm"></td><td colspan="4"></td></tr>
          <tr><td><svg><use href="#i-end"/></svg></td><td>Face3</td><td colspan="8"></td></tr>
          <tr class="part"><td></td><td colspan="9">1T0_501_611_T</td></tr>
          <tr><td><svg><use href="#i-start"/></svg></td><td>Face4</td><td colspan="8"></td></tr>
          <tr class="dim"><td><svg><use href="#i-run"/></svg></td><td>Dimension3</td><td></td><td>-1</td><td><span class="basic">11.00</span></td><td><button class="tol"><span class="fcf"><i><svg><use href="#i-profile"/></svg></i><i>0.15</i><i>A</i></span></button></td><td><svg class="lk"><use href="#i-link"/></svg></td><td colspan="3"></td></tr>
          <tr><td><svg><use href="#i-node"/></svg></td><td>A</td><td colspan="7"></td><td><button class="del" aria-label="Remove"><svg><use href="#i-x"/></svg></button></td></tr>
          <tr class="dim"><td><svg><use href="#i-run"/></svg></td><td>Dimension4</td><td></td><td>-1</td><td><span class="basic">37.60</span></td><td><button class="tol"><span class="fcf"><i><svg><use href="#i-profile"/></svg></i><i>0.15</i><i>A</i></span></button></td><td><svg class="lk"><use href="#i-link"/></svg></td><td colspan="3"></td></tr>
          <tr><td><svg><use href="#i-end"/></svg></td><td>Face5</td><td colspan="8"></td></tr>
          <tr class="part"><td></td><td colspan="9">V3FL_505_435</td></tr>
          <tr><td><svg><use href="#i-start"/></svg></td><td>B</td><td colspan="8"></td></tr>
          <tr class="dim"><td><svg><use href="#i-run"/></svg></td><td>Dimension5</td><td></td><td>-1</td><td><span class="basic">28.20</span></td><td><button class="tol"><span class="fcf"><i><svg><use href="#i-position"/></svg></i><i>0.15</i><i>B</i></span></button></td><td><svg class="lk"><use href="#i-link"/></svg></td><td colspan="3"></td></tr>
          <tr><td><svg><use href="#i-end"/></svg></td><td>Face6</td><td colspan="8"></td></tr>
          <tr class="part"><td></td><td colspan="9">V3FL_615_559</td></tr>
          <tr><td><svg><use href="#i-start"/></svg></td><td>Face7</td><td colspan="8"></td></tr>
          <tr class="dim"><td><svg><use href="#i-run"/></svg></td><td>Dimension6</td><td></td><td>+1</td><td>20.0</td><td><input class="tol" aria-label="Dimension6 tolerance" value="±0.1 mm"></td><td colspan="4"></td></tr>
          <tr><td><svg><use href="#i-node"/></svg></td><td>A</td><td colspan="7"></td><td><button class="del" aria-label="Remove"><svg><use href="#i-x"/></svg></button></td></tr>
          <tr class="dim"><td><svg><use href="#i-run"/></svg></td><td>Dimension7</td><td></td><td>-1</td><td><span class="basic">10.00</span></td><td><button class="tol"><span class="fcf"><i><svg><use href="#i-position"/></svg></i><i>⌀0.15Ⓜ</i><i>A</i></span></button></td><td colspan="4"></td></tr>
          <tr class="sel"><td><svg viewBox="0 0 24 24"><circle cx="12" cy="14.500" r="7" fill="#f3f3f3" stroke="#777" stroke-width="1.500"/><circle cx="12" cy="15" r="3" fill="#ee1313"/><path d="M12 0v8" stroke="#4a4a4a" stroke-width="2"/><path d="M7 6h10l-5 9z" fill="#4a4a4a"/></svg></td><td>Hole13</td><td></td><td>0</td><td>(Ø8.50)</td><td><input class="tol" aria-label="Hole13 tolerance" value="±0.05 mm"></td><td colspan="4"></td></tr>
          <tr class="part"><td></td><td colspan="9">DIN_912_TORNILLO_ALL</td></tr>
          <tr><td><svg viewBox="0 0 24 24"><circle cx="12" cy="11.500" r="6.500" fill="#e8e8e8" stroke="#666" stroke-width="1.300"/><circle cx="12" cy="11.500" r="2.800" fill="#3f4447"/></svg></td><td>Shaft8</td><td></td><td>+½</td><td>Ø10.00</td><td><input class="tol" aria-label="Shaft8 tolerance" value="±0.05 mm"></td><td colspan="4"></td></tr>
          <tr class="asm"><td><button class="shift" aria-label="Assembly shift"><svg width="20" height="12" viewBox="0 0 20 12"><path d="M0 6l7-6v4.500h6V0l7 6-7 6V7.500H7V12z" fill="#444a4e"/></svg></button></td><td>Asm shift Shaft8-Hole9</td><td></td><td>+1</td><td>0</td><td><span class="plain">±0.08 mm</span></td><td colspan="4"></td></tr>
          <tr class="part"><td></td><td colspan="9"></td></tr>
        </tbody>
      </table>
      </div>
      <div class="scroll"><span class="sbtn"><span class="tri up"></span></span><span class="thumb"></span><span class="track"></span><span class="sbtn"><span class="tri grey"></span></span></div>
    </div>

    <h3 class="details"><span class="tri grey big5"></span>Details</h3>
    <div class="ptabs"><button class="cur">Results</button><button>Contributions</button></div>
    <div class="results">
      <h4>Worst Case Results for Brake Pad - Rotor Gap</h4>
      <svg class="chart" viewBox="0 0 690 130" role="img" aria-label="Worst case range">
        <path d="M161 27h421v28H161zM159 10h3v42l-3 3zM580 10h3v46h-3z" fill="#15921f"/>
        <path d="M20 42h656M113.500 18v46M370.500 42v41" stroke="#000" stroke-width="3" fill="none"/>
        <path d="M26 36l-8 6 8 6" fill="none" stroke="#000" stroke-width="3"/><path d="M670 36l8 6-8 6" fill="none" stroke="#000" stroke-width="3"/>
        <text x="156" y="4" text-anchor="end">0.345 mm</text><text x="583" y="4">3.395 mm</text><text x="110" y="79" text-anchor="end">0.000 mm</text><text x="380" y="99" text-anchor="middle">1.870 mm</text>
      </svg>
      <p class="warn"><svg width="24" height="22" viewBox="0 0 24 22"><path d="M12 0l12 22H0z" fill="#ffd21a"/><path d="M10.500 6h3l-.7 8h-1.600zM11 16h2v2.500h-2z" fill="#222"/></svg>Calculated results are ignoring potentially significant 3D effects</p>
    </div>
  </aside>

  <footer class="status">
    <button class="ic" aria-label="Navigator"><svg width="16" height="16" viewBox="0 0 16 16"><path d="M.5.500h15v14H.5z" fill="#fff" stroke="#888"/><path d="M.5 3.500h15" stroke="#888"/><path d="M.5 4.500h5v11h-5z" fill="#d9eef5" stroke="#2a6f8a"/><path d="M7 13q4.500-4 9 0-4.500 4-9 0z" fill="#333"/><circle cx="11.500" cy="13" r="1" fill="#fff"/></svg></button>
    <button class="ic" aria-label="Browser"><svg width="17" height="16" viewBox="0 0 17 16"><circle cx="8.500" cy="8" r="7" fill="url(#gGlobe)"/><path d="M5 5l3-2 2 3-3 4zM11 6l3 3-3 3z" fill="#d8f2fb" opacity=".7"/><ellipse cx="8.500" cy="8" rx="9" ry="3" fill="none" stroke="#555" transform="rotate(-45 8.500 8)"/></svg></button>
    <button class="ic" aria-label="Full screen"><svg width="16" height="16" viewBox="0 0 16 16"><path d="M.5.500h15v15H.5z" fill="url(#gPale)" stroke="#2a6a86"/></svg></button>
    <span class="ssep"></span>
    <div class="sright">
      <span class="ssep"></span>
      <button class="ic" aria-label="Regenerate"><svg width="15" height="16" viewBox="0 0 15 16"><path d="M.5 9.500h6v6h-6zM2 8h6v6" fill="#e2f4fb" stroke="#3b8aa8"/><path d="M5 4l3-3 2 4M12 3v5l-3 1M13 1l-2 3 4 1z" fill="#1f7391" stroke="#1f7391"/></svg></button>
      <span class="ssep"></span>
      <button class="find" aria-label="Find"><svg width="18" height="16" viewBox="0 0 18 16"><path d="M3 0h3l1 3h4l1-3h3l3 15h-6V8H7v7H0z" fill="#3a3a3a"/><path d="M4 3L3 13M14 3l1 10" stroke="#999"/></svg><span class="drop"><span class="tri"></span></span></button>
      <span class="ssep"></span>
      <button class="filt" aria-label="Selection filter"><svg width="18" height="18" viewBox="0 0 18 18"><path d="M1.500 4.500h12v13h-12zM1.500 4.500l3-3h12v13l-3 3M16.500 1.500l-3 3" fill="#fff" stroke="#444"/><path d="M4.500 8.500h6v7h-6zM4.500 8.500l2-2h6v7l-2 2" fill="#a9e0f3" stroke="#2a7c9c"/></svg></button>
      <div class="combo geom"><select aria-label="Filter"><option>Geometry</option></select><span class="drop"><span class="tri"></span></span></div>
    </div>
  </footer>
</div>
</body>
</html>
```
FILE: styles.css
```css
* { box-sizing: border-box; }
body { margin: 0; font: 12px/15px Lato, "Open Sans", sans-serif; color: #444a4e; background: #fff; }
h1, h2, h3, h4, p { margin: 0; font-size: inherit; font-weight: normal; }
button, select, input { font: inherit; color: inherit; }
button { border: 0; background: none; padding: 0; }
svg { display: block; flex: none; }
.defs { position: absolute; width: 0; height: 0; }
.ic { display: flex; align-items: center; justify-content: center; }

.app {
  min-height: 100vh;
  display: grid;
  grid-template-columns: minmax(0, 1fr) 700px;
  grid-template-rows: 28px 27px 107px minmax(0, 1fr) 36px;
  border-bottom: 2px solid #444648;
}

.tri { display: block; width: 0; height: 0; border: 4px solid transparent; border-top: 5px solid #555; border-bottom: 0; }
.tri.pale { border-top-color: #aeb1b2; }
.tri.white { border-top-color: #fff; }
.tri.grey { border-top-color: #8d9092; }
.tri.up { border-top: 0; border-bottom: 5px solid #9a9d9e; }
.tri.big5 { border-width: 8px 5px 0; }

/* title bar */
.titlebar { grid-column: 1 / -1; display: grid; grid-template-columns: 1fr auto 1fr; align-items: center; background: #dbdfdf; }
.qat { display: flex; align-items: center; padding-left: 8px; }
.brand { font: 18px/24px Lato, sans-serif; color: #4a4f52; margin-left: 4px; width: 40px; }
.brand sup { font-size: 8px; line-height: 8px; }
.q1 { margin-left: 21px; }
.q2, .q3, .q4 { margin-left: 8px; }
.q5, .q7 { margin-left: 6px; }
.q6, .q8 { margin-left: 9px; }
.q9 { margin-left: 7px; }
.q10 { margin-left: 5px; }
.q11 { margin-left: 8px; }
.q12 { margin-left: 9px; }
.qsep { width: 1px; height: 26px; background: #b1b5b5; margin-left: 6px; }
.q13 { margin-left: 7px; }
.apptitle { font-size: 13px; color: #b3b7b7; }
.winbtns { display: flex; justify-content: flex-end; gap: 15px; padding-right: 11px; }

/* tab bar */
.tabs { grid-column: 1 / -1; display: flex; background: #3e4448; }
.tabs a { color: #fff; text-decoration: none; font-size: 13px; line-height: 28px; padding: 0 24px 0 23px; }
.tabs .file { padding: 0; width: 59px; text-align: center; background: linear-gradient(#64c64a, #53ab39); }
.tabs .on { padding: 0; width: 131px; text-align: center; background: #f6fafb; color: #3f7d30; }
.tabtools { margin-left: auto; display: flex; align-items: center; gap: 12px; padding: 0 8px 3px 0; color: #fff; }
.tabtools .tri { margin-left: -2px; }
.tabtools b { font: bold 14px/16px Lato, sans-serif; }

/* ribbon */
.ribbon { grid-column: 1 / -1; grid-row: 3; display: flex; padding: 2px 0 3px; background: #f6fafb; border-bottom: 1px solid #aeb4b9; }
.group { display: flex; flex-direction: column; justify-content: space-between; border-right: 1px solid #a9adb0; padding: 0 2px; }
.group h2 { text-align: center; line-height: 17px; }
.tools { display: flex; }
.big { display: flex; flex-direction: column; align-items: center; height: 79px; padding: 0 3px; border: 1px solid transparent; line-height: 15px; }
.big svg { height: 33px; margin: 3px 0 8px; }
.pressed { background: #dcdfe0; border-color: #adb0b1; }
.rows { flex-direction: column; gap: 8px; padding-top: 3px; }
.small { display: flex; align-items: center; gap: 4px; height: 18px; }
.data { padding: 0 7px; }
.closegrp { padding: 0 6px; }
.closegrp .big svg { margin: 6px 0 5px; }

/* graphics area */
.view { grid-column: 1; grid-row: 4; position: relative; overflow: hidden; background: #fefefe; }
.scene { position: absolute; inset: 0; width: 100%; height: 100%; }
.model path, .model ellipse { stroke: #1b1f2c; stroke-width: 1; vector-effect: non-scaling-stroke; }
.model path.cut, .model .cut ellipse { stroke: #4b1a80; }
.witness path { fill: none; stroke: #2f9be8; stroke-width: 1; vector-effect: non-scaling-stroke; }
.dims path { fill: none; stroke: #3a86c4; stroke-width: 1; vector-effect: non-scaling-stroke; }
.dims .gap { stroke: #3a1555; }
.dimtext text { font: 30px "Liberation Sans", Arial, sans-serif; fill: #1589e6; }
.dimtext .gaptext { fill: #2c0a4c; }
.viewbar { position: absolute; top: 7px; right: 49px; height: 32px; display: flex; align-items: center; gap: 2px; padding: 0 3px; border: 1px solid #989b9d; background: #f7f9fa; }
.viewbar .ic { position: relative; width: 24px; height: 24px; border: 1px solid transparent; }
.viewbar .active { background: #dadddd; border-color: #9fa2a3; }
.viewbar .more::after { content: ""; position: absolute; right: 0; bottom: 1px; border: 2px solid #444; border-left-color: transparent; border-top-color: transparent; }
.clipstate { position: absolute; left: 10px; bottom: 148px; font: 13px/16px "Liberation Sans", Arial, sans-serif; color: #929292; }

/* analysis panel */
.panel { grid-column: 2; grid-row: 3 / 5; z-index: 1; margin: 4px 0 -4px; display: flex; flex-direction: column; background: #ebefef; border: 2px solid #a4a8aa; border-right-width: 1px; box-shadow: inset 1px 1px #f3f5f5; }
.phead { display: grid; grid-template-columns: 1fr auto; align-items: center; height: 28px; background: #dadede; padding-right: 12px; color: #333; }
.phead h2 { text-align: center; padding-left: 18px; }
.ptools { display: flex; align-items: center; height: 32px; padding: 0 3px 0 0; }
.pt { display: flex; align-items: center; justify-content: center; height: 32px; border-right: 1px solid #b3b7b8; }
.w1 { width: 25px; }
.w2 { width: 49px; gap: 8px; }
.w3 { width: 88px; gap: 8px; }
.w4 { width: 25px; }
.w5 { width: 25px; border: 0; }
.ptools label { margin: 0 134px 0 auto; }
.combo { display: flex; align-items: center; border: 1px solid #a7abad; background: #f8fafa; }
.combo select { flex: 1; min-width: 0; height: 100%; border: 0; padding: 0; background: none; appearance: none; outline: 0; }
.atype { width: 146px; height: 24px; padding-left: 11px; gap: 8px; }
.drop { display: flex; align-items: center; justify-content: center; align-self: stretch; width: 15px; border-left: 1px solid #a7abad; }
.stackname { height: 21px; line-height: 21px; text-align: center; font-weight: bold; }

.grid { flex: 1 1 0; min-height: 0; display: flex; margin: 0 1px; border: 1px solid #a9adaf; background: #fff; overflow: hidden; }
.tablearea { flex: 1; min-width: 0; overflow: hidden; }
table { width: 100%; border-collapse: collapse; table-layout: fixed; color: #1c1c1c; }
.c1 { width: 29px; } .c2 { width: 126px; } .c3 { width: 30px; } .c4 { width: 55px; } .c5 { width: 78px; } .c6 { width: 102px; } .c7 { width: 30px; } .c8 { width: 78px; } .c9 { width: 30px; } .c10 { width: 30px; }
th { height: 22px; padding: 2px 0 0 6px; font-weight: normal; text-align: left; border-right: 1px solid #cfd2d3; border-bottom: 1px solid #cfd2d3; background: #fcfdfd; color: #333; }
th:last-child { border-right: 0; }
td { height: 24px; padding: 0 0 0 3px; background: #fcfcfc; overflow: hidden; white-space: nowrap; }
td svg { width: 24px; height: 24px; }
td:first-child { padding: 0; }
td:nth-child(4) { text-align: center; padding: 0; }
td:nth-child(5) { text-align: right; padding: 0 1px 0 0; }
td:nth-child(6) { padding: 0; }
.dim td { background: #f1f1f1; }
.part td { background: #dbdbdb; }
.sel td { background: #ade3fe; }
.asm td { background: #efeffd; }
.tol { display: flex; align-items: center; width: 101px; height: 24px; padding: 0 0 0 2px; border: 1px solid #b9bcbd; background: none; outline: 0; }
.sel .tol { border-color: #83c3df; }
.plain { padding-left: 3px; }
.basic { display: inline-block; height: 17px; line-height: 15px; padding: 0 1px; margin-right: 4px; border: 1px solid #111; vertical-align: middle; }
.fcf { display: flex; height: 17px; margin-left: 1px; border: 1px solid #111; }
.fcf i { display: flex; align-items: center; font-style: normal; padding: 0 1px; line-height: 15px; }
.fcf i + i { border-left: 1px solid #111; }
.fcf svg { width: 11px; height: 11px; }
td svg.lk { width: 20px; height: 22px; }
.del, .shift { display: flex; align-items: center; justify-content: center; width: 28px; height: 24px; border: 1px solid #b5b8ba; background: #fdfdfd; }
td:nth-child(4):last-child { padding-left: 1px; }
.del svg { width: 18px; height: 18px; }
.shift { background: #f0effa; }
.shift svg { width: 20px; height: 12px; }
.scroll { width: 15px; margin-top: 22px; display: flex; flex-direction: column; border-left: 1px solid #c6caca; background: #fff; }
.sbtn { display: flex; align-items: center; justify-content: center; height: 15px; border: 1px solid #cdd0d0; border-left: 0; background: #f8f9f9; }
.thumb { flex: 340; background: #f5f6f6; border-bottom: 1px solid #b9bcbd; }
.track { flex: 232; background: #dde1e2; }

.details { display: flex; align-items: center; gap: 8px; height: 30px; padding: 2px 0 0 6px; font-weight: bold; }
.ptabs { display: flex; margin-left: 1px; }
.ptabs button { height: 23px; padding: 0 9px 2px; border: 1px solid #c9cdce; border-width: 1px 1px 0 0; color: #7c8082; }
.ptabs .cur { padding: 0 8px 2px; background: #fbfcfc; color: #333; border-left-width: 1px; }
.results { height: 222px; margin: 0 2px 1px 1px; padding: 20px 0 0 20px; border: 1px solid #c6caca; border-top: 2px solid #6c6f70; border-left: 2px solid #6c6f70; background: #fff; color: #000; font: 11px/16px "DejaVu Sans Condensed", "DejaVu Sans", sans-serif; }
.results h4, .warn { font-weight: bold; }
.chart { width: 690px; max-width: calc(100% + 20px); margin: 33px 0 0 -20px; overflow: visible; }
.warn { display: flex; align-items: center; gap: 4px; margin-top: -21px; }

/* status bar */
.status { grid-column: 1 / -1; display: flex; align-items: center; padding: 3px 0 0 9px; gap: 10px; background: #f6f9f8; border-top: 1px solid #b2b6b6; }
.ssep { width: 1px; height: 24px; margin-left: 2px; background: #b2b6b6; }
.sright { margin-left: auto; display: flex; align-items: center; gap: 3px; padding: 0 19px 0 0; }
.sright .ssep { height: 29px; margin: 0; }
.sright .ic { width: 19px; }
.find { display: flex; align-items: center; justify-content: space-between; width: 42px; height: 24px; padding-left: 4px; border: 1px solid #b2b6b6; }
.filt { display: flex; align-items: center; justify-content: center; width: 40px; height: 28px; border: 1px solid #a9adaf; }
.geom { width: 164px; height: 23px; margin-left: 87px; padding-left: 7px; }
```
